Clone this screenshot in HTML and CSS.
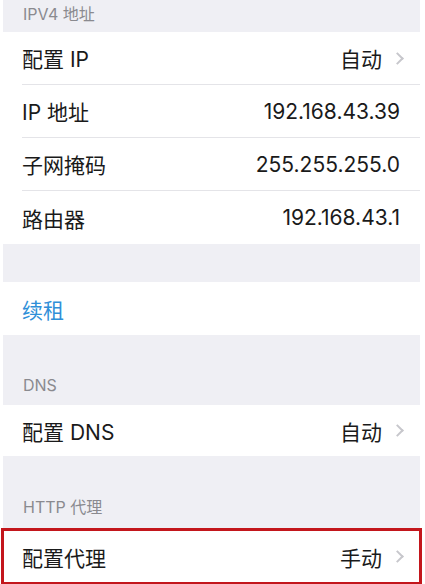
FILE: index.html
```html
<!DOCTYPE html>
<html lang="zh-CN">
<head>
  <meta charset="UTF-8" />
  <meta name="viewport" content="width=device-width, initial-scale=1" />
  <title>Wi-Fi 设置</title>
  <link rel="stylesheet" href="styles.css">
</head>
<body>
  <div class="frame">
    <div class="section-header first">IPV4 地址</div>
    <div class="group">
      <div class="row">
        <span class="label">配置 IP</span>
        <span class="value">自动<span class="chevron"></span></span>
      </div>
      <div class="row">
        <span class="label">IP 地址</span>
        <span class="value plain">192.168.43.39</span>
      </div>
      <div class="row">
        <span class="label">子网掩码</span>
        <span class="value plain">255.255.255.0</span>
      </div>
      <div class="row">
        <span class="label">路由器</span>
        <span class="value plain">192.168.43.1</span>
      </div>
    </div>

    <div class="spacer"></div>
    <div class="group">
      <div class="row">
        <span class="label link">续租</span>
      </div>
    </div>

    <div class="section-header">DNS</div>
    <div class="group">
      <div class="row short">
        <span class="label">配置 DNS</span>
        <span class="value">自动<span class="chevron"></span></span>
      </div>
    </div>

    <div class="section-header tall">HTTP 代理</div>
    <div class="group highlight">
      <div class="row">
        <span class="label">配置代理</span>
        <span class="value">手动<span class="chevron"></span></span>
      </div>
    </div>
  </div>
</body>
</html>
```

FILE: styles.css
```css
body {
  margin: 0;
  background: #fff;
  font-family: "Inter", "Noto Sans CJK SC", sans-serif;
  color: #1a1a1a;
}
.frame {
  margin: 0 5px 0 3px;
  background: #efeff4;
}
.section-header {
  height: 70px;
  box-sizing: border-box;
  padding: 0 0 10px 20px;
  display: flex;
  align-items: flex-end;
  font-size: 16px;
  color: #8a8a8f;
}
.section-header.first {
  height: 32px;
  padding-bottom: 7px;
}
.section-header.tall {
  height: 72px;
}
.spacer {
  height: 38px;
}
.group {
  background: #fff;
}
.row {
  box-sizing: border-box;
  height: 53px;
  margin-left: 19px;
  padding-right: 18px;
  display: flex;
  align-items: center;
  justify-content: space-between;
  border-bottom: 1px solid #e4e4e8;
  font-size: 21px;
}
.row.short {
  height: 51px;
}
.row:last-child {
  border-bottom: none;
}
.label.link {
  color: #2f8fd8;
}
.value {
  display: flex;
  align-items: center;
}
.value.plain {
  margin-right: 2px;
}
.chevron {
  width: 7px;
  height: 7px;
  margin-left: 11px;
  border-top: 2px solid #c7c7cc;
  border-right: 2px solid #c7c7cc;
  transform: rotate(45deg);
}
.highlight {
  margin: 0 -2px 0 -2px;
  border: 3px solid #c3161c;
  border-bottom-width: 2px;
}
.highlight .row {
  height: 51px;
  margin-left: 18px;
  padding-right: 17px;
}
```
